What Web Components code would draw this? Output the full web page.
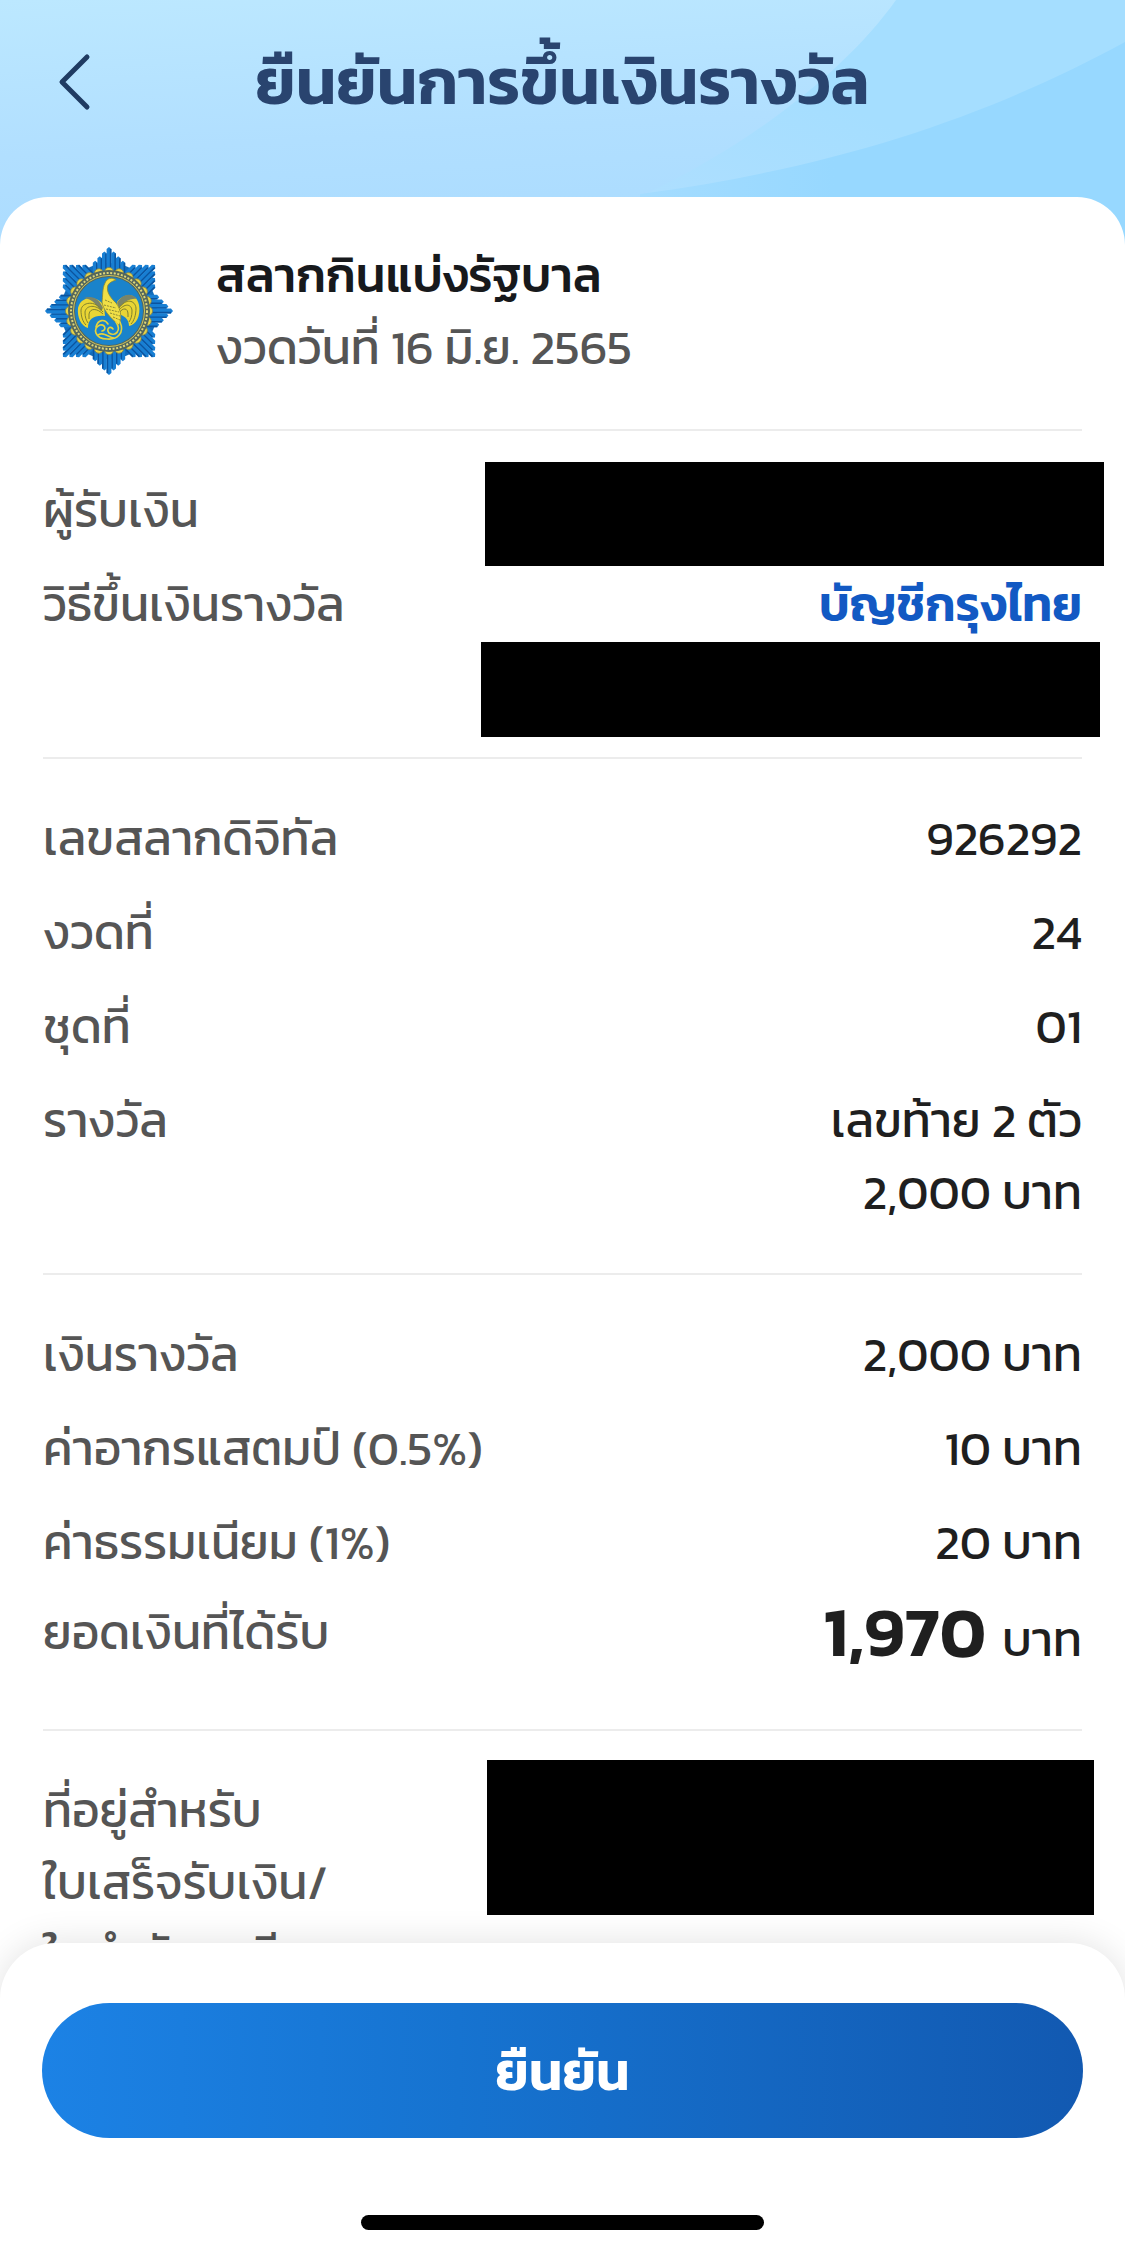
<!DOCTYPE html>
<html lang="th">
<head>
<meta charset="utf-8">
<meta name="viewport" content="width=device-width, initial-scale=1">
<title>ยืนยันการขึ้นเงินรางวัล</title>
<style>
    body {
        margin: 0;
        font-family: Kanit, "Noto Sans Thai", sans-serif;
        font-size: 48px;
        line-height: 72px;
        color: #1f1f1f;
    }
</style>
</head>
<body>

<claim-screen>
    <page-header slot="header">ยืนยันการขึ้นเงินรางวัล</page-header>

    <lottery-summary>
        <span slot="name">สลากกินแบ่งรัฐบาล</span>
        <span slot="draw">งวดวันที่ 16 มิ.ย. 2565</span>
    </lottery-summary>

    <detail-section>
        <detail-row>
            <span slot="label">ผู้รับเงิน</span>
            <hidden-value style="--top: -12px; --right: -22px; --height: 104px"></hidden-value>
        </detail-row>
        <detail-row>
            <span slot="label">วิธีขึ้นเงินรางวัล</span>
            <bank-name>บัญชีกรุงไทย</bank-name>
            <hidden-value style="--top: 2px; --right: -18px; --height: 95px"></hidden-value>
        </detail-row>
    </detail-section>

    <detail-section>
        <detail-row>
            <span slot="label">เลขสลากดิจิทัล</span>
            <span>926292</span>
        </detail-row>
        <detail-row>
            <span slot="label">งวดที่</span>
            <span>24</span>
        </detail-row>
        <detail-row>
            <span slot="label">ชุดที่</span>
            <span>01</span>
        </detail-row>
        <detail-row>
            <span slot="label">รางวัล</span>
            <span>เลขท้าย 2 ตัว</span>
            <span>2,000 บาท</span>
        </detail-row>
    </detail-section>

    <detail-section>
        <detail-row>
            <span slot="label">เงินรางวัล</span>
            <span>2,000 บาท</span>
        </detail-row>
        <detail-row>
            <span slot="label">ค่าอากรแสตมป์ (0.5%)</span>
            <span>10 บาท</span>
        </detail-row>
        <detail-row>
            <span slot="label">ค่าธรรมเนียม (1%)</span>
            <span>20 บาท</span>
        </detail-row>
        <detail-row total>
            <span slot="label">ยอดเงินที่ได้รับ</span>
            <total-amount>1,970<span slot="unit">บาท</span></total-amount>
        </detail-row>
    </detail-section>

    <detail-section>
        <detail-row>
            <span slot="label">ที่อยู่สำหรับ<br>ใบเสร็จรับเงิน/<br>ใบกำกับภาษี</span>
            <hidden-value style="--top: -14px; --right: -12px; --width: 607px; --height: 155px"></hidden-value>
        </detail-row>
    </detail-section>

    <confirm-bar slot="footer">ยืนยัน</confirm-bar>
</claim-screen>

<script>
class BaseElement extends HTMLElement {
    constructor() {
        super();
        this.attachShadow({ mode: 'open' });
        this.shadowRoot.innerHTML = this.render();
    }
}

class ClaimScreen extends BaseElement {
    render() {
        return `
            <style>
                :host {
                    display: flex;
                    flex-direction: column;
                    height: 100vh;
                    overflow: hidden;
                    background: #94d7ff;
                }
                main {
                    flex: 1;
                    min-height: 0;
                    overflow: hidden;
                    position: relative;
                    margin: -48px 0 -56px;
                    padding: 0 43px;
                    border-radius: 48px 48px 0 0;
                    background: #fff;
                }
            </style>
            <slot name="header"></slot>
            <main><slot></slot></main>
            <slot name="footer"></slot>
        `;
    }
}

class PageHeader extends BaseElement {
    render() {
        return `
            <style>
                :host {
                    display: grid;
                    grid-template-columns: 66px 1fr 66px;
                    align-items: center;
                    position: relative;
                    padding: 32px 42px 114px;
                }
                .backdrop {
                    position: absolute;
                    inset: 0;
                    width: 100%;
                    height: 100%;
                }
                button {
                    position: relative;
                    display: flex;
                    padding: 0 16px;
                    border: 0;
                    background: none;
                }
                h1 {
                    position: relative;
                    margin: 0;
                    font-size: 65px;
                    font-weight: 600;
                    line-height: 99px;
                    text-align: center;
                    color: #29446f;
                }
            </style>
            <svg class="backdrop" viewBox="0 0 1125 245" preserveAspectRatio="none" aria-hidden="true">
                <defs>
                    <linearGradient id="sky" x1="0" y1="0" x2=".25" y2="1">
                        <stop offset="0" stop-color="#bce8ff"/>
                        <stop offset=".6" stop-color="#b1dfff"/>
                        <stop offset="1" stop-color="#abdcff"/>
                    </linearGradient>
                    <linearGradient id="ray" x1="0" y1="1" x2="1" y2="0">
                        <stop offset="0" stop-color="#b0dfff"/>
                        <stop offset=".5" stop-color="#a5deff"/>
                    </linearGradient>
                    <linearGradient id="glow" x1="0" y1="0" x2="1" y2="0">
                        <stop offset="0" stop-color="#a4dcff"/>
                        <stop offset=".4" stop-color="#97d8ff"/>
                    </linearGradient>
                </defs>
                <rect width="1125" height="245" fill="url(#sky)"/>
                <path d="M896 0C850 65 760 140 640 197V245H1125V0Z" fill="url(#ray)"/>
                <path d="M1125 42C1000 110 850 166 640 194V245H1125Z" fill="url(#glow)"/>
            </svg>
            <button type="button" aria-label="ย้อนกลับ">
                <svg width="34" height="60" viewBox="0 0 34 60" fill="none" stroke="#1f3b62" stroke-width="5" stroke-linecap="round" stroke-linejoin="round">
                    <path d="M29 5L4 30L29 55"/>
                </svg>
            </button>
            <h1><slot></slot></h1>
        `;
    }
}

class LotteryEmblem extends BaseElement {
    // one bundle of parallel rays pointing up, the middle one longest
    rays(tip) {
        let out = '';
        for (let i = -3; i <= 3; i++) {
            const x = i * 4.6;
            const y = -tip + Math.abs(x);
            out += `<path d="M${x - 2.4} 0V${y + 1}L${x} ${y - 1}L${x + 2.4} ${y + 1}V0Z" fill="#187fd3"/>`;
            out += `<path d="M${x + 1.6} 0V${y + 1}" stroke="#0b549f" stroke-width="1.6"/>`;
        }
        return out;
    }

    render() {
        const bundles = [45, 135, 225, 315].map(a => `<g transform="rotate(${a})">${this.rays(64)}</g>`)
            .concat([0, 90, 180, 270].map(a => `<g transform="rotate(${a})">${this.rays(63)}</g>`))
            .join('');
        let scallops = '';
        for (let i = 0; i < 24; i++) {
            scallops += `<circle cx="0" cy="-39" r="4.6" transform="rotate(${i * 15})"/>`;
        }
        return `
            <style>
                :host { display: block; }
                svg { display: block; }
            </style>
            <svg width="132" height="132" viewBox="-66 -66 132 132" aria-hidden="true">
                <circle r="48" fill="#126cba"/>
                ${bundles}
                <g fill="#e6d246" stroke="#7d8350" stroke-width=".8">${scallops}</g>
                <circle r="41" fill="#54665c"/>
                <circle r="38" fill="none" stroke="#ddd67a" stroke-width="2" stroke-dasharray="2 1.6"/>
                <circle r="35.5" fill="none" stroke="#cfc45a" stroke-width="1"/>
                <circle r="34" fill="#1a83cb"/>
                <!-- wings -->
                <path d="M-5 -5C-11 -16 -28 -16 -31 -3C-32 6 -28 15 -21 17C-21 8 -15 4 -4 5Z" fill="#e9d534"/>
                <path d="M8 -9C14 -17 27 -20 30 -6C32 5 27 14 20 15C20 8 15 4 8 3Z" fill="#e9d534"/>
                <path d="M-6 -3C-10 -13 -17 -16 -25 -13C-16 -12 -12 -5 -8 0Z" fill="#78846a"/>
                <path d="M8 -8C13 -17 22 -19 28 -12C21 -13 15 -9 10 -3Z" fill="#78846a"/>
                <g fill="none" stroke="#81822f" stroke-width="1">
                    <path d="M-7 -1C-14 -11 -27 -9 -28 -1C-28 6 -26 11 -23 14"/>
                    <path d="M-6 1C-13 -7 -23 -6 -24 1C-24 6 -23 9 -21 12"/>
                    <path d="M-6 3C-12 -3 -19 -3 -20 3V8"/>
                    <path d="M10 -3C17 -13 26 -11 27 -3C27 4 25 10 22 13"/>
                    <path d="M10 -1C17 -9 23 -6 23 0C23 5 22 8 20 11"/>
                    <path d="M10 2C14 -4 19 -3 19 3V6"/>
                </g>
                <!-- neck and body -->
                <path d="M7 -31C3 -34 -2 -33 -4 -28C-7 -22 -6 -15 -7 -9C-6 -2 0 6 10 14C14 6 11 -5 5 -10C0 -15 -3 -21 -1 -26C1 -29 4 -30 7 -31Z" fill="#f0df46" stroke="#8b8934" stroke-width=".8"/>
                <path d="M-5 -6L7 -3M-3 -2L10 1M1 2L11 5M4 6L11 9M-4 -11L3 -8" stroke="#8b8934" stroke-width="1" stroke-dasharray="2 1"/>
                <!-- curled tail -->
                <g fill="none" stroke="#e5d33c" stroke-width="1.6" stroke-linecap="round">
                    <path d="M11 11C16 22 8 29 -2 28C-14 28 -17 17 -9 14C-4 13 -2 19 -7 20"/>
                    <path d="M7 11C13 20 6 26 0 22C-3 18 1 14 4 18"/>
                    <path d="M-13 16C-11 8 -4 8 -1 13"/>
                    <path d="M-11 24C-5 20 0 27 5 27"/>
                </g>
            </svg>
        `;
    }
}

class LotterySummary extends BaseElement {
    render() {
        return `
            <style>
                :host {
                    display: flex;
                    align-items: center;
                    gap: 41px;
                    padding: 42px 0 46px;
                }
                h2, p {
                    margin: 0;
                    font-size: 48px;
                    line-height: 72px;
                }
                h2 { font-weight: 500; color: #17191c; }
                p { color: #555; }
            </style>
            <lottery-emblem></lottery-emblem>
            <div>
                <h2><slot name="name"></slot></h2>
                <p><slot name="draw"></slot></p>
            </div>
        `;
    }
}

class DetailSection extends BaseElement {
    render() {
        return `
            <style>
                :host {
                    display: flex;
                    flex-direction: column;
                    gap: 22px;
                    padding: 43px 0 45px;
                    border-top: 2px solid #ececec;
                }
            </style>
            <slot></slot>
        `;
    }
}

class DetailRow extends BaseElement {
    render() {
        return `
            <style>
                :host {
                    display: flex;
                    justify-content: space-between;
                    align-items: flex-start;
                }
                :host([total]) {
                    align-items: center;
                    margin-top: -20px;
                }
                .label { color: #555; white-space: nowrap; }
                .value {
                    display: flex;
                    flex: 1;
                    flex-direction: column;
                    align-items: flex-end;
                    text-align: right;
                }
            </style>
            <div class="label"><slot name="label"></slot></div>
            <div class="value"><slot></slot></div>
        `;
    }
}

class BankName extends BaseElement {
    render() {
        return `
            <style>
                :host { display: block; font-weight: 600; color: #1259c3; }
            </style>
            <slot></slot>
        `;
    }
}

class TotalAmount extends BaseElement {
    render() {
        return `
            <style>
                :host { display: flex; align-items: baseline; gap: 16px; }
                strong { font-size: 70px; font-weight: 600; line-height: 104px; }
            </style>
            <strong><slot></slot></strong>
            <slot name="unit"></slot>
        `;
    }
}

// keeps one line of space in the row, the bar covers what is around it
class HiddenValue extends BaseElement {
    render() {
        return `
            <style>
                :host {
                    display: block;
                    position: relative;
                    width: var(--width, 619px);
                    height: 72px;
                }
                div {
                    position: absolute;
                    top: var(--top);
                    right: var(--right);
                    width: 100%;
                    height: var(--height);
                    background: #000;
                }
            </style>
            <div></div>
        `;
    }
}

class ConfirmBar extends BaseElement {
    render() {
        return `
            <style>
                :host {
                    display: flex;
                    flex-direction: column;
                    position: relative;
                    padding: 60px 42px 23px;
                    border-radius: 56px 56px 0 0;
                    background: #fff;
                    box-shadow: 0 0 36px rgba(0, 0, 0, .12);
                }
                button {
                    height: 135px;
                    border: 0;
                    border-radius: 68px;
                    background: linear-gradient(90deg, #1c82e5, #1673d0 40%, #1259b1);
                    font: inherit;
                    font-size: 54px;
                    font-weight: 600;
                    color: #fff;
                }
                .home {
                    align-self: center;
                    width: 403px;
                    height: 15px;
                    margin-top: 77px;
                    border-radius: 8px;
                    background: #000;
                }
            </style>
            <button type="button"><slot></slot></button>
            <div class="home"></div>
        `;
    }
}

customElements.define('lottery-emblem', LotteryEmblem);
customElements.define('claim-screen', ClaimScreen);
customElements.define('page-header', PageHeader);
customElements.define('lottery-summary', LotterySummary);
customElements.define('detail-section', DetailSection);
customElements.define('detail-row', DetailRow);
customElements.define('bank-name', BankName);
customElements.define('total-amount', TotalAmount);
customElements.define('hidden-value', HiddenValue);
customElements.define('confirm-bar', ConfirmBar);
</script>
</body>
</html>
